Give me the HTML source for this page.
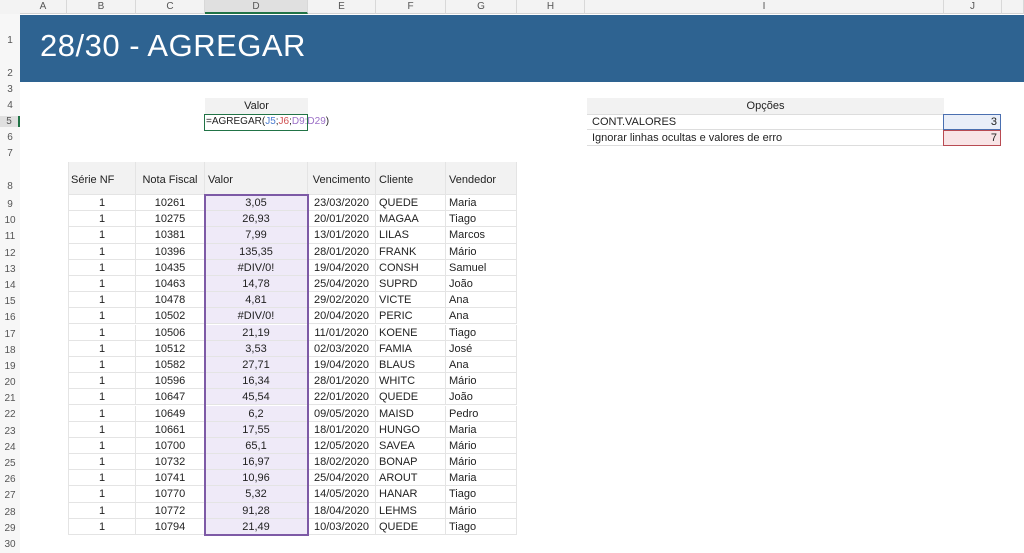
<!DOCTYPE html><html><head><meta charset="utf-8"><style>
body{margin:0;width:1024px;height:549px;overflow:hidden;background:#fff;font-family:"Liberation Sans",sans-serif;font-size:11px;color:#222;position:relative}
.a{position:absolute}
.ch{top:0;height:14px;background:#f3f3f3;border-bottom:1px solid #d4d4d4;border-right:1px solid #d8d8d8;box-sizing:border-box;text-align:center;font-size:10px;color:#555;line-height:14px}
.rh{left:0;width:20px;text-align:center;font-size:10px;color:#555;background:#f7f7f7}
.row{position:absolute;left:69px;width:448px;height:16.19px;display:flex;line-height:16px}
.row div{box-sizing:border-box;border-right:1px solid #e4e4e4;border-bottom:1px solid #e4e4e4;height:100%;white-space:nowrap;overflow:hidden}
.c1{width:67px;text-align:center}.c2{width:69px;text-align:center}.c3{width:103px;text-align:center;background:#efeaf8}.c4{width:68px;text-align:center}.c5{width:70px;padding-left:3px}.c6{width:71px;padding-left:3px}
</style></head><body>
<div class="a" style="left:0;top:0;width:20px;height:14px;background:#f3f3f3;border-bottom:1px solid #d4d4d4"></div>
<div class="a ch" style="left:20px;width:47px">A</div>
<div class="a ch" style="left:67px;width:69px">B</div>
<div class="a ch" style="left:136px;width:69px">C</div>
<div class="a ch" style="left:205px;width:103px;background:#e0e0e0;border-bottom:2px solid #217346">D</div>
<div class="a ch" style="left:308px;width:68px">E</div>
<div class="a ch" style="left:376px;width:70px">F</div>
<div class="a ch" style="left:446px;width:71px">G</div>
<div class="a ch" style="left:517px;width:68px">H</div>
<div class="a ch" style="left:585px;width:359px">I</div>
<div class="a ch" style="left:944px;width:58px">J</div>
<div class="a ch" style="left:1002px;width:22px"></div>
<div class="a rh" style="top:14px;height:535px"></div>
<div class="a" style="left:20px;top:15px;width:1004px;height:67px;background:#2e6391"></div>
<div class="a" style="left:40px;top:28px;color:#fff;font-size:31px;letter-spacing:0.5px">28/30 - AGREGAR</div>
<div class="a rh" style="top:35px">1</div><div class="a rh" style="top:68px">2</div>
<div class="a rh" style="top:84px">3</div><div class="a rh" style="top:100px">4</div><div class="a rh" style="top:116px;background:#e0e0e0;border-right:2px solid #217346;width:18px">5</div><div class="a rh" style="top:132px">6</div><div class="a rh" style="top:148px">7</div><div class="a rh" style="top:181px">8</div>
<div class="a rh" style="top:197px;line-height:16.19px">9<br>10<br>11<br>12<br>13<br>14<br>15<br>16<br>17<br>18<br>19<br>20<br>21<br>22<br>23<br>24<br>25<br>26<br>27<br>28<br>29<br>30</div>
<div class="a" style="left:205px;top:98px;width:103px;height:16px;background:#f2f2f2;text-align:center;line-height:16px;border-bottom:1px solid #ddd">Valor</div>
<div class="a" style="left:204px;top:114px;width:104px;height:17px;border:1.5px solid #217346;box-sizing:border-box;line-height:14px;font-size:10px;white-space:nowrap;padding-left:1px;background:#fff">=AGREGAR(<span style="color:#4a7bd0">J5</span>;<span style="color:#d05050">J6</span>;<span style="color:#9b6fc7">D9:D29</span>)</div>
<div class="a" style="left:587px;top:98px;width:357px;height:16px;background:#f2f2f2;text-align:center;line-height:16px;border-bottom:1px solid #ddd">Opções</div>
<div class="a" style="left:587px;top:114px;width:357px;height:16px;line-height:16px;padding-left:5px;border-bottom:1px solid #ddd;box-sizing:border-box">CONT.VALORES</div>
<div class="a" style="left:587px;top:130px;width:357px;height:16px;line-height:16px;padding-left:5px;border-bottom:1px solid #ddd;box-sizing:border-box">Ignorar linhas ocultas e valores de erro</div>
<div class="a" style="left:943px;top:114px;width:58px;height:16px;box-sizing:border-box;border:1.5px solid #4a6fb0;background:#e9eef8;text-align:right;line-height:14px;padding-right:3px">3</div>
<div class="a" style="left:943px;top:130px;width:58px;height:16px;box-sizing:border-box;border:1.5px solid #b84a52;background:#f8e4e6;text-align:right;line-height:14px;padding-right:3px">7</div>
<div class="row" style="top:162px;height:33px;line-height:36px;background:#f2f2f2"><div class="c1" style="text-align:left;padding-left:2px">Série NF</div><div class="c2">Nota Fiscal</div><div class="c3" style="text-align:left;padding-left:3px;background:#f2f2f2">Valor</div><div class="c4">Vencimento</div><div class="c5">Cliente</div><div class="c6">Vendedor</div></div>
<div class="row" style="top:195.0px"><div class="c1">1</div><div class="c2">10261</div><div class="c3">3,05</div><div class="c4">23/03/2020</div><div class="c5">QUEDE</div><div class="c6">Maria</div></div>
<div class="row" style="top:211.2px"><div class="c1">1</div><div class="c2">10275</div><div class="c3">26,93</div><div class="c4">20/01/2020</div><div class="c5">MAGAA</div><div class="c6">Tiago</div></div>
<div class="row" style="top:227.4px"><div class="c1">1</div><div class="c2">10381</div><div class="c3">7,99</div><div class="c4">13/01/2020</div><div class="c5">LILAS</div><div class="c6">Marcos</div></div>
<div class="row" style="top:243.6px"><div class="c1">1</div><div class="c2">10396</div><div class="c3">135,35</div><div class="c4">28/01/2020</div><div class="c5">FRANK</div><div class="c6">Mário</div></div>
<div class="row" style="top:259.8px"><div class="c1">1</div><div class="c2">10435</div><div class="c3">#DIV/0!</div><div class="c4">19/04/2020</div><div class="c5">CONSH</div><div class="c6">Samuel</div></div>
<div class="row" style="top:276.0px"><div class="c1">1</div><div class="c2">10463</div><div class="c3">14,78</div><div class="c4">25/04/2020</div><div class="c5">SUPRD</div><div class="c6">João</div></div>
<div class="row" style="top:292.1px"><div class="c1">1</div><div class="c2">10478</div><div class="c3">4,81</div><div class="c4">29/02/2020</div><div class="c5">VICTE</div><div class="c6">Ana</div></div>
<div class="row" style="top:308.3px"><div class="c1">1</div><div class="c2">10502</div><div class="c3">#DIV/0!</div><div class="c4">20/04/2020</div><div class="c5">PERIC</div><div class="c6">Ana</div></div>
<div class="row" style="top:324.5px"><div class="c1">1</div><div class="c2">10506</div><div class="c3">21,19</div><div class="c4">11/01/2020</div><div class="c5">KOENE</div><div class="c6">Tiago</div></div>
<div class="row" style="top:340.7px"><div class="c1">1</div><div class="c2">10512</div><div class="c3">3,53</div><div class="c4">02/03/2020</div><div class="c5">FAMIA</div><div class="c6">José</div></div>
<div class="row" style="top:356.9px"><div class="c1">1</div><div class="c2">10582</div><div class="c3">27,71</div><div class="c4">19/04/2020</div><div class="c5">BLAUS</div><div class="c6">Ana</div></div>
<div class="row" style="top:373.1px"><div class="c1">1</div><div class="c2">10596</div><div class="c3">16,34</div><div class="c4">28/01/2020</div><div class="c5">WHITC</div><div class="c6">Mário</div></div>
<div class="row" style="top:389.3px"><div class="c1">1</div><div class="c2">10647</div><div class="c3">45,54</div><div class="c4">22/01/2020</div><div class="c5">QUEDE</div><div class="c6">João</div></div>
<div class="row" style="top:405.5px"><div class="c1">1</div><div class="c2">10649</div><div class="c3">6,2</div><div class="c4">09/05/2020</div><div class="c5">MAISD</div><div class="c6">Pedro</div></div>
<div class="row" style="top:421.7px"><div class="c1">1</div><div class="c2">10661</div><div class="c3">17,55</div><div class="c4">18/01/2020</div><div class="c5">HUNGO</div><div class="c6">Maria</div></div>
<div class="row" style="top:437.9px"><div class="c1">1</div><div class="c2">10700</div><div class="c3">65,1</div><div class="c4">12/05/2020</div><div class="c5">SAVEA</div><div class="c6">Mário</div></div>
<div class="row" style="top:454.1px"><div class="c1">1</div><div class="c2">10732</div><div class="c3">16,97</div><div class="c4">18/02/2020</div><div class="c5">BONAP</div><div class="c6">Mário</div></div>
<div class="row" style="top:470.2px"><div class="c1">1</div><div class="c2">10741</div><div class="c3">10,96</div><div class="c4">25/04/2020</div><div class="c5">AROUT</div><div class="c6">Maria</div></div>
<div class="row" style="top:486.4px"><div class="c1">1</div><div class="c2">10770</div><div class="c3">5,32</div><div class="c4">14/05/2020</div><div class="c5">HANAR</div><div class="c6">Tiago</div></div>
<div class="row" style="top:502.6px"><div class="c1">1</div><div class="c2">10772</div><div class="c3">91,28</div><div class="c4">18/04/2020</div><div class="c5">LEHMS</div><div class="c6">Mário</div></div>
<div class="row" style="top:518.8px"><div class="c1">1</div><div class="c2">10794</div><div class="c3">21,49</div><div class="c4">10/03/2020</div><div class="c5">QUEDE</div><div class="c6">Tiago</div></div>
<div class="a" style="left:68px;top:162px;width:1px;height:373px;background:#e4e4e4"></div>
<div class="a" style="left:204px;top:194px;width:105px;height:342px;box-sizing:border-box;border:2px solid #7d5aa6"></div>
</body></html>
